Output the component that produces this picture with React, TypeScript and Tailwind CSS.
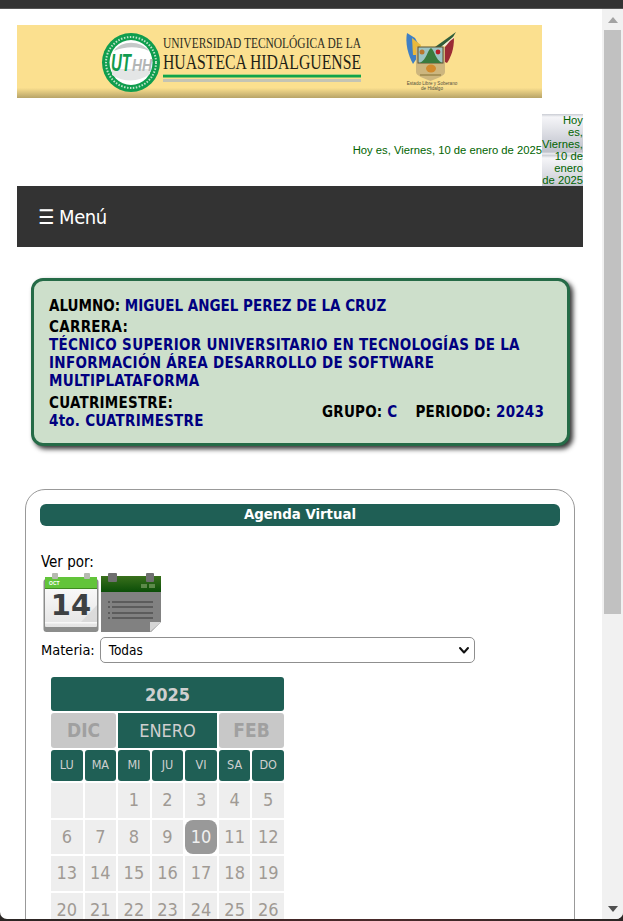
import React from "react";

const weeks: (number | null)[][] = [
  [null, null, 1, 2, 3, 4, 5],
  [6, 7, 8, 9, 10, 11, 12],
  [13, 14, 15, 16, 17, 18, 19],
  [20, 21, 22, 23, 24, 25, 26],
];
const dias = ["LU", "MA", "MI", "JU", "VI", "SA", "DO"];

function Banner() {
  return (
    <svg width="525" height="73" viewBox="0 0 525 73" className="block">
      <defs>
        <linearGradient id="ban" x1="0" y1="0" x2="0" y2="1">
          <stop offset="0" stopColor="#fbe08f" />
          <stop offset="0.86" stopColor="#fbe08f" />
          <stop offset="1" stopColor="#b8a468" />
        </linearGradient>
      </defs>
      <rect width="525" height="73" fill="url(#ban)" />
      <ellipse cx="114" cy="37.5" rx="29" ry="29.5" fill="#0f9d4e" />
      <ellipse cx="114" cy="37.5" rx="25" ry="25.5" fill="none" stroke="#bfe3c8" strokeWidth="2" strokeDasharray="1.5 1.5" />
      <ellipse cx="114" cy="37.5" rx="21.5" ry="22.5" fill="#fff" />
      <path d="M97 26 C104 15 124 15 132 26 C122 21 108 21 97 26 Z" fill="#c5c9c9" />
      <path d="M95 50 C108 58 122 57 133 49 L133 44 L95 44 Z" fill="#e4e6e6" />
      <text x="94" y="46" fontFamily="'Liberation Sans', sans-serif" fontSize="24" fontWeight="700" fontStyle="italic" fill="#119c4f" textLength="20" lengthAdjust="spacingAndGlyphs">UT</text>
      <text x="115" y="46" fontFamily="'Liberation Sans', sans-serif" fontSize="17" fontWeight="700" fontStyle="italic" fill="#b3b6b6" textLength="20" lengthAdjust="spacingAndGlyphs">HH</text>
      <text x="146" y="23" fontFamily="'Liberation Serif', serif" fontSize="15" fill="#2d2d22" textLength="198" lengthAdjust="spacingAndGlyphs">UNIVERSIDAD TECNOLÓGICA DE LA</text>
      <text x="146" y="44" fontFamily="'Liberation Serif', serif" fontSize="20" fill="#1f1f16" textLength="198" lengthAdjust="spacingAndGlyphs">HUASTECA HIDALGUENSE</text>
      <rect x="146" y="49" width="198" height="1" fill="#a8cf7a" />
      <rect x="146" y="50" width="198" height="2.5" fill="#11a44a" />
      <rect x="146" y="54" width="198" height="3" fill="#c4c4b4" />
      <path d="M390 8 L398 13 L403 22 L400 33 L396 39 C391 30 388 18 390 8 Z" fill="#3f7fc4" />
      <path d="M395 13 L404 20 L400 30 L396 30 Z" fill="#e9b93b" />
      <path d="M418 22 L439 7 L436 12 L424 22 Z" fill="#2f5d3a" />
      <path d="M424 22 L438 11 L433 19 Z" fill="#f1ede0" />
      <path d="M433 16 L437 13 C437 24 434 32 430 38 L426 36 L428 22 Z" fill="#9b2c35" />
      <path d="M399 22 H428 V47 C428 51 420 53 413.5 56 C407 53 399 51 399 47 Z" fill="#cdb67e" />
      <rect x="401" y="22" width="25" height="16" fill="#9cc4c4" stroke="#5c5230" strokeWidth="1" />
      <path d="M403 38 C410 34 410 26 414 23 C418 26 418 34 425 38 Z" fill="#3a7a3d" />
      <circle cx="405" cy="27" r="2.5" fill="#b9772f" />
      <circle cx="421" cy="27" r="2.4" fill="#b5202a" />
      <ellipse cx="414" cy="43.5" rx="5" ry="4" fill="#d28a2c" />
      <rect x="403" y="49" width="21" height="2" fill="#a89358" />
      <text x="415" y="60" textAnchor="middle" fontFamily="'Liberation Sans', sans-serif" fontSize="4.6" fill="#55503c">Estado Libre y Soberano</text>
      <text x="415" y="65" textAnchor="middle" fontFamily="'Liberation Sans', sans-serif" fontSize="4.6" fill="#55503c">de Hidalgo</text>
    </svg>
  );
}

function IconDay() {
  return (
    <svg width="58" height="60" viewBox="0 0 58 60" className="block">
      <defs>
        <linearGradient id="d1" x1="0" y1="0" x2="0" y2="1">
          <stop offset="0" stopColor="#fff" />
          <stop offset="1" stopColor="#e4e4e4" />
        </linearGradient>
      </defs>
      <rect x="0.5" y="6" width="55" height="53" rx="3" fill="#8c8d8c" />
      <rect x="2" y="4" width="52" height="50" rx="1" fill="url(#d1)" />
      <path d="M2 4 H54 V15 H2 Z" fill="#62c43a" />
      <rect x="2" y="15" width="52" height="1" fill="#3e8a20" />
      <rect x="9" y="0" width="6" height="6" rx="1" fill="#b5bab0" />
      <rect x="41" y="0" width="6" height="6" rx="1" fill="#b5bab0" />
      <text x="6" y="12" fontFamily="'Liberation Sans', sans-serif" fontSize="5" fontWeight="700" fill="#fff">OCT</text>
      <text x="28" y="42" textAnchor="middle" fontFamily="'DejaVu Sans', sans-serif" fontSize="29" fontWeight="700" fill="#3d4143">14</text>
      <path d="M54 32 L54 49 L38 49 Z" fill="#d4d4d4" opacity="0.7" />
      <rect x="2" y="49" width="52" height="1.5" fill="#f8f8f8" />
    </svg>
  );
}

function IconMonth() {
  return (
    <svg width="60" height="60" viewBox="0 0 60 60" className="block">
      <defs>
        <linearGradient id="d2" x1="0" y1="0" x2="0" y2="1">
          <stop offset="0" stopColor="#3a701c" />
          <stop offset="1" stopColor="#0b4e08" />
        </linearGradient>
      </defs>
      <path d="M0 3 H60 V49 L50 59 H0 Z" fill="#818181" />
      <rect x="0" y="3" width="60" height="16" fill="url(#d2)" />
      <rect x="7" y="0" width="9" height="9" rx="1" fill="#6f6f6f" />
      <rect x="45" y="0" width="8" height="9" rx="1" fill="#6f6f6f" />
      <rect x="40" y="11" width="6" height="4" fill="#5d8a4a" />
      <rect x="48" y="11" width="6" height="4" fill="#5d8a4a" />
      {[28, 33, 39, 44].map((y) => (
        <g key={y}>
          <rect x="7" y={y} width="2" height="2" fill="#5c5c5c" />
          <rect x="11" y={y} width="41" height="2" fill="#5c5c5c" />
        </g>
      ))}
      <path d="M49 59 V49 H60 Z" fill="#d6d6d6" />
    </svg>
  );
}

export default function App() {
  return (
    <div className="h-[921px] w-[623px] overflow-hidden bg-[linear-gradient(90deg,#2b2725_0%,#3a2222_30%,#4a2a2a_60%,#2b2725_100%)] pb-[2px] font-['Liberation_Sans',sans-serif]">
      <div className="flex h-full flex-col overflow-hidden rounded-b-[7px] bg-white">
        <div className="h-[9px] shrink-0 border-b border-[#555] bg-[#333]" />
        <div className="flex min-h-0 flex-1">
          <main className="min-w-0 flex-1 overflow-hidden pl-[17px] pt-[16px]">
            <div className="w-[566px]">
              <Banner />
              <div className="mt-[16px] flex h-[72px] text-[11.25px] text-[#006400]">
                <div className="flex w-[525px] items-center justify-end leading-[13px] whitespace-nowrap">
                  Hoy es, Viernes, 10 de enero de 2025
                </div>
                <div className="w-[41px] whitespace-nowrap bg-[linear-gradient(180deg,#c9ccd3_0px,#f5f5f8_3px,#e4e5ea_14px,#d0d2da_26px,#bfc2cb_38px,#f5f5f8_40px,#c9ccd3_41px,#f5f5f8_44px,#e4e5ea_55px,#d0d2da_67px,#bfc2cb_72px)] text-right leading-[12px]">
                  <span className="float-right">
                    Hoy
                    <br />
                    es,
                    <br />
                    Viernes,
                    <br />
                    10 de
                    <br />
                    enero
                    <br />
                    de 2025
                  </span>
                </div>
              </div>
              <nav className="flex h-[61px] items-center bg-[#333] pl-[21px] font-['DejaVu_Sans_Condensed',sans-serif] text-[20px] tracking-[-0.4px] text-white">
                ☰ Menú
              </nav>

              <section className="ml-[14px] mt-[31px] h-[168px] w-[539px] rounded-[12px] border-[3px] border-[#256b47] bg-[#cddfcb] px-[15px] pt-[16px] font-['DejaVu_Sans_Condensed',sans-serif] text-[15px] font-bold leading-[18px] text-black shadow-[3px_3px_5px_#333]">
                <p>
                  ALUMNO: <span className="text-[#000080]">MIGUEL ANGEL PEREZ DE LA CRUZ</span>
                </p>
                <p className="mt-[3px] tracking-[0.3px]">CARRERA:</p>
                <p className="tracking-[0.3px] text-[#000080]">
                  TÉCNICO SUPERIOR UNIVERSITARIO EN TECNOLOGÍAS DE LA INFORMACIÓN ÁREA DESARROLLO DE SOFTWARE MULTIPLATAFORMA
                </p>
                <div className="mt-[4px] flex items-center justify-between pr-[8px]">
                  <p className="tracking-[0.25px]">
                    CUATRIMESTRE:
                    <br />
                    <span className="text-[#000080]">4to. CUATRIMESTRE</span>
                  </p>
                  <p className="tracking-[0.2px]">
                    GRUPO: <span className="text-[#000080]">C</span>
                    <span className="ml-[18px]">PERIODO:</span> <span className="text-[#000080]">20243</span>
                  </p>
                </div>
              </section>

              <section className="ml-[8px] mt-[43px] h-[500px] w-[550px] rounded-[20px] border border-[#999] px-[14px] pt-[14px] font-['DejaVu_Sans_Condensed',sans-serif]">
                <h2 className="flex h-[22px] items-center justify-center rounded-[6px] bg-[#1f5f55] pb-[1px] text-[14.8px] font-bold text-white">
                  Agenda Virtual
                </h2>
                <p className="ml-[1px] mt-[27px] text-[15px] leading-[18px] text-black">Ver por:</p>
                <div className="ml-[3px] mt-[2px] flex">
                  <IconDay />
                  <IconMonth />
                </div>
                <div className="ml-[1px] mt-[4px] flex h-[26px] items-center gap-[5px] text-[14.5px] text-black">
                  <span className="pt-[2px]">Materia:</span>
                  <div className="flex h-[26px] w-[375px] items-center justify-between rounded-[5px] border border-[#8f8f8f] bg-white pl-[8px] pr-[4px] text-[13.5px]">
                    <span>Todas</span>
                    <svg width="12" height="12" viewBox="0 0 12 12" fill="none" stroke="#111" strokeWidth="2" strokeLinecap="round" strokeLinejoin="round">
                      <path d="M2 4 L6 8.5 L10 4" />
                    </svg>
                  </div>
                </div>

                <div className="ml-[11px] mt-[14px] w-[233px]">
                  <div className="flex h-[34px] items-center justify-center rounded-[3px] bg-[#1f5f55] text-[18px] font-bold text-[#cfcfcf]">
                    2025
                  </div>
                  <div className="mt-[2px] grid h-[35px] grid-cols-[65px_99px_65px] gap-[2px] text-[18px]">
                    <div className="flex items-center justify-center rounded-[3px] bg-[#c8c8c8] text-[19px] font-bold text-[#a0a0a0]">DIC</div>
                    <div className="flex items-center justify-center bg-[#1f5f55] text-[#cfcfcf]">ENERO</div>
                    <div className="flex items-center justify-center rounded-[3px] bg-[#c8c8c8] text-[19px] font-bold text-[#a0a0a0]">FEB</div>
                  </div>
                  <div className="mt-[2px] grid h-[31px] grid-cols-7 gap-[2px] text-[12.5px]">
                    {dias.map((d) => (
                      <div key={d} className="flex items-center justify-center rounded-[3px] bg-[#1f5f55] text-[#cfcfcf]">
                        {d}
                      </div>
                    ))}
                  </div>
                  <div className="mt-[2px] grid grid-cols-7 gap-[2px] text-[18px] text-[#a09a94]">
                    {weeks.flat().map((n, i) => (
                      <div
                        key={i}
                        className={
                          n === 10
                            ? "flex h-[34.6px] items-center justify-center rounded-[8px] bg-[#999] pb-[1px] text-[#f0f0f0]"
                            : "flex h-[34.6px] items-center justify-center bg-[#eeeeee] pb-[1px]"
                        }
                      >
                        {n}
                      </div>
                    ))}
                  </div>
                </div>
              </section>
            </div>
          </main>
          <aside className="flex w-[21px] shrink-0 flex-col items-center bg-[#f1f1f1]">
            <div className="flex h-[21px] items-center justify-center">
              <svg width="10" height="6" viewBox="0 0 10 6"><path d="M5 0 L10 6 H0 Z" fill="#a3a3a3" /></svg>
            </div>
            <div className="h-[584px] w-[17px] bg-[#c1c1c1]" />
            <div className="mt-auto flex h-[20px] items-center justify-center">
              <svg width="10" height="6" viewBox="0 0 10 6"><path d="M0 0 H10 L5 6 Z" fill="#505050" /></svg>
            </div>
          </aside>
        </div>
      </div>
    </div>
  );
}
